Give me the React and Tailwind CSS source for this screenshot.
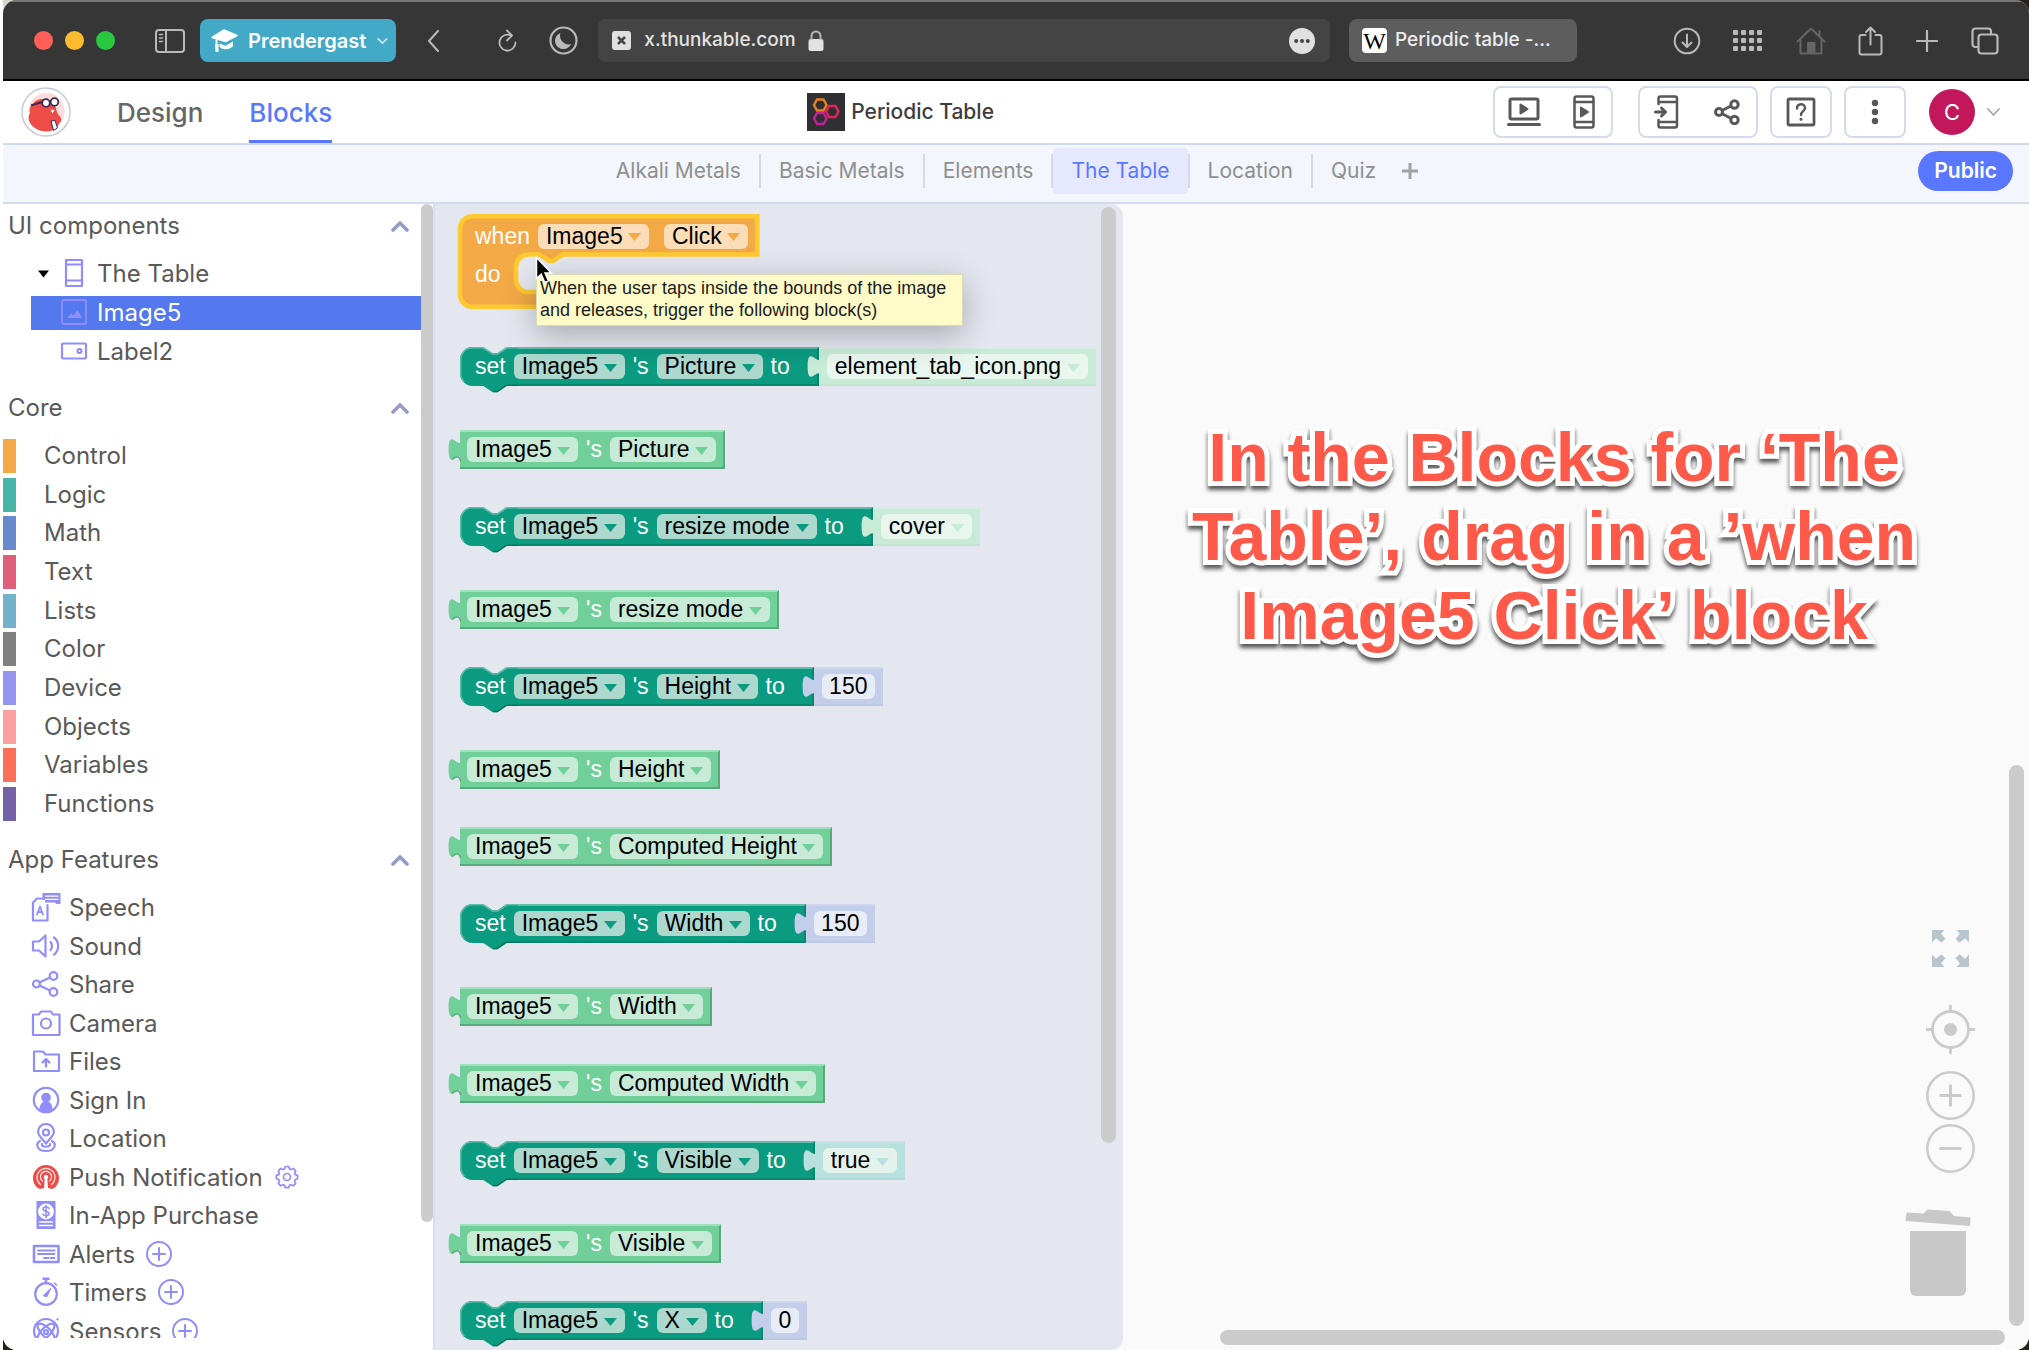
import React from "react";

/* ---------- browser toolbar icons ---------- */

const line = { fill: "none", stroke: "currentColor", strokeLinecap: "round", strokeLinejoin: "round" };

function SidebarIcon() {
  return (
    <svg className="h-6 w-[30px]" viewBox="0 0 30 24" {...line} strokeWidth="2">
      <rect x="1" y="1" width="28" height="22" rx="3" />
      <path d="M11 1v22" />
      <path d="M4.500 5.500h3M4.500 9h3M4.500 12.500h3" strokeWidth="1.500" />
    </svg>
  );
}

function CapIcon() {
  return (
    <svg className="h-6 w-[27px]" viewBox="0 0 27 24" fill="white">
      <path d="M13 1 26 6.500 14.500 12.500 1 8.500z" stroke="white" strokeWidth="1.500" strokeLinejoin="round" />
      <path d="M8.500 14.500l6 2.200L22 12.500v4.500c-2 2.500-5.500 3.500-8 3.300-3-.2-4.500-1.300-5.500-2.800z" />
      <path d="M5.500 10.500v6" stroke="white" strokeWidth="2" fill="none" />
      <path d="M4 15h3.500v8h-3z" />
    </svg>
  );
}

function Chevron({ className, d = "M1 1l5 5 5-5", box = "0 0 12 7", width = 2 }) {
  return (
    <svg className={className} viewBox={box} {...line} strokeWidth={width}>
      <path d={d} />
    </svg>
  );
}

function BrowserBar() {
  return (
    <div className="flex h-[81px] shrink-0 items-center border-t-2 border-b-2 border-t-[#767676] border-b-black bg-[#363636] pr-[30px] pl-[31px] font-[Inter] text-[#b9b9b9]">
      <div className="flex shrink-0 gap-3">
        <button aria-label="Close" className="size-[19px] rounded-full bg-[#ff5f56]" />
        <button aria-label="Minimise" className="size-[19px] rounded-full bg-[#fdbc2f]" />
        <button aria-label="Zoom" className="size-[19px] rounded-full bg-[#28c840]" />
      </div>
      <button aria-label="Sidebar" className="ml-10 shrink-0"><SidebarIcon /></button>
      <button className="ml-[15px] flex h-[43px] shrink-0 items-center rounded-lg bg-[#42a9c6] pr-2 pl-[11px] text-[20px] font-semibold text-white">
        <CapIcon />
        <span className="ml-[10px]">Prendergast</span>
        <Chevron className="ml-[11px] h-[6px] w-[11px] text-white/70" />
      </button>
      <button aria-label="Back" className="ml-[31px] shrink-0">
        <Chevron className="h-[22px] w-3" box="0 0 12 22" d="M11 1 2 11l9 10" />
      </button>
      <button aria-label="Reload" className="ml-[59px] shrink-0">
        <svg className="h-[23px] w-[19px]" viewBox="0 0 19 23" {...line} strokeWidth="1.800">
          <path d="M13 6.400A8 8 0 1 0 17.500 13.500" />
          <path d="M9 1.500l5 5-5 5" />
        </svg>
      </button>
      <button aria-label="Dark mode" className="ml-8 shrink-0">
        <svg className="size-[29px]" viewBox="0 0 29 29">
          <circle cx="14.500" cy="14.500" r="13" fill="none" stroke="currentColor" strokeWidth="2.200" />
          <path d="M11.500 7a8.300 8.300 0 1 0 10.500 11A8.600 8.600 0 0 1 11.500 7z" fill="currentColor" />
        </svg>
      </button>
      <div className="ml-5 flex h-[43px] min-w-0 flex-1 items-center rounded-lg bg-[#444444] pr-[15px] pl-[14px] text-[#e2e2e2]">
        <svg className="size-[19px] shrink-0" viewBox="0 0 19 19">
          <rect width="19" height="19" rx="3" fill="#e0e0e0" />
          <path d="M6 6l7 7M13 6l-7 7" stroke="#444" strokeWidth="2.500" />
        </svg>
        <input aria-label="Address" defaultValue="x.thunkable.com" className="ml-[13px] w-[158px] bg-transparent text-[19px] font-medium outline-none" />
        <svg className="ml-1.5 h-[22px] w-4 shrink-0" viewBox="0 0 16 22">
          <rect x="0.500" y="9" width="15" height="12" rx="2" fill="#e2e2e2" />
          <path d="M3.500 10V6a4.500 4.500 0 0 1 9 0v4" fill="none" stroke="#b5b5b5" strokeWidth="2" />
        </svg>
        <button aria-label="Page options" className="ml-auto shrink-0">
          <svg className="size-[26px]" viewBox="0 0 26 26">
            <circle cx="13" cy="13" r="13" fill="#e0e0e0" />
            <circle cx="7.200" cy="13" r="2" fill="#444" />
            <circle cx="13" cy="13" r="2" fill="#444" />
            <circle cx="18.800" cy="13" r="2" fill="#444" />
          </svg>
        </button>
      </div>
      <button className="ml-[19px] flex h-[43px] w-[228px] shrink-0 items-center rounded-lg bg-[#5d5d5d] pl-[13px] text-[19px] font-medium text-[#ececec]">
        <span className="flex size-[25px] items-center justify-center rounded bg-white font-['Liberation_Serif'] text-[24px] leading-none text-black">W</span>
        <span className="ml-2">Periodic table -...</span>
      </button>
      <button aria-label="Downloads" className="ml-24 shrink-0">
        <svg className="size-7" viewBox="0 0 28 28" {...line} strokeWidth="2">
          <circle cx="14" cy="14" r="12.300" />
          <path d="M14 7.500v12M9.500 15.500l4.500 4.500 4.500-4.500" />
        </svg>
      </button>
      <button aria-label="Sites" className="ml-8 grid shrink-0 grid-cols-4 gap-[3px]">
        {Array.from({ length: 12 }, (_, i) => (
          <span key={i} className="size-[5px] rounded-[1px] bg-[#b9b9b9]" />
        ))}
      </button>
      <button aria-label="Home" className="ml-[34px] shrink-0 text-[#656565]">
        <svg className="h-7 w-[30px]" viewBox="0 0 30 28" {...line} strokeWidth="2">
          <path d="M1.500 14.500 15 1.500l13.500 13M4.500 12.500V26.500h21v-14M23.500 9V4" />
          <rect x="12" y="16" width="6.500" height="10" fill="currentColor" />
        </svg>
      </button>
      <button aria-label="Share page" className="ml-8 shrink-0">
        <svg className="h-[30px] w-[25px]" viewBox="0 0 25 30" {...line} strokeWidth="2">
          <path d="M7.500 9H3.500a2 2 0 0 0-2 2v15.500a2 2 0 0 0 2 2h18a2 2 0 0 0 2-2V11a2 2 0 0 0-2-2h-4" />
          <path d="M12.500 18.500V1.500M8 6l4.500-4.500L17 6" />
        </svg>
      </button>
      <button aria-label="New tab" className="ml-[33px] shrink-0">
        <svg className="size-[22px]" viewBox="0 0 22 22" {...line} strokeWidth="2.200"><path d="M11 1v20M1 11h20" /></svg>
      </button>
      <button aria-label="Tab overview" className="ml-[33px] shrink-0">
        <svg className="size-7" viewBox="0 0 28 28" {...line} strokeWidth="2.200">
          <rect x="7.500" y="7.500" width="19" height="19" rx="3" />
          <path d="M7 20H4.500a3 3 0 0 1-3-3V4.500a3 3 0 0 1 3-3H17a3 3 0 0 1 3 3V7" />
        </svg>
      </button>
    </div>
  );
}

/* ---------- app header ---------- */

function Beaver() {
  return (
    <svg className="size-[50px]" viewBox="0 0 50 50">
      <circle cx="25" cy="25" r="24" fill="#fff" stroke="#c5cad9" strokeWidth="1.500" />
      <circle cx="25.500" cy="24" r="18" fill="#fbdcda" />
      <path d="M9 26c-1-4 .5-7 3-9 2-3.500 7-6 12-4.500 6-.5 9 3.500 10.500 7.500 1 2.500.5 4 3 8 3.500 3 3.500 6 1 8-2 5-7 8.500-13.500 8.500C15 44 8 38 7.500 31c0-2 .7-3.500 1.500-5z" fill="#ee4c47" />
      <g fill="#fff" stroke="#3b2a55" strokeWidth="1.800">
        <circle cx="25" cy="16" r="3.800" />
        <circle cx="33.500" cy="15" r="3.800" />
      </g>
      <path d="M10 18.500l11-3.500" stroke="#3b2a55" strokeWidth="2" />
      <path d="M29.500 22.500l4 .5-2 3.500z" fill="#fff" />
      <path d="M30 34l4-.5 2.500 7.500-4 2.500z" fill="#fff" stroke="#3b2a55" strokeWidth="1" />
    </svg>
  );
}

function ProjectIcon() {
  return (
    <svg className="h-[38px] w-[38px]" viewBox="0 0 38 38" fill="none" strokeWidth="2.400">
      <rect width="38" height="38" fill="#302f33" />
      <path d="M10 6.500h6.500l3 5.500-3 5.500H10L7 12z" stroke="#e8821f" />
      <path d="M22 13h6.500l3 5.500-3 5.500H22l-3-5.500z" stroke="#e0245c" />
      <path d="M10 20h6.500l3 5.500-3 5.500H10l-3-5.500z" stroke="#c4219a" />
    </svg>
  );
}

const boxed = "flex h-[52px] items-center rounded-lg border-2 border-[#d5dbed] text-[#58585a]";

function Header() {
  return (
    <header className="flex h-[64px] shrink-0 items-center justify-between border-b-2 border-[#d3d9ec] bg-white pr-[29px] pl-[18px] font-[Inter]">
      <div className="flex h-full items-center">
        <a href="#home" aria-label="Home"><Beaver /></a>
        <a href="#design" className="ml-[46px] text-[26px] font-medium text-[#666]">Design</a>
        <a href="#blocks" className="ml-[46px] flex h-full items-center border-t-3 border-b-3 border-t-transparent border-b-[#5a78ff] text-[26px] font-medium text-[#5a78ff]">Blocks</a>
      </div>
      <div className="mr-6 flex items-center gap-1.5">
        <ProjectIcon />
        <h1 className="text-[21px] font-medium text-[#3d3d3d]">Periodic Table</h1>
      </div>
      <div className="flex items-center">
        <div className={`${boxed} w-[120px] justify-between pr-[16px] pl-[12px]`}>
          <button aria-label="Web preview">
            <svg className="h-[30px] w-[34px]" viewBox="0 0 34 30" {...line} strokeWidth="3">
              <rect x="3" y="2" width="28" height="20" rx="1.500" />
              <path d="M1.500 27.500h31" />
              <path d="M13.500 7.500v9l7-4.500z" fill="currentColor" strokeWidth="2" />
            </svg>
          </button>
          <button aria-label="Phone preview">
            <svg className="h-[34px] w-[22px]" viewBox="0 0 22 34" {...line} strokeWidth="2.500">
              <rect x="1.500" y="1.500" width="19" height="31" rx="2" />
              <path d="M2 7h18M2 27h18" />
              <path d="M8 12.500v9l7-4.500z" fill="currentColor" strokeWidth="2" />
            </svg>
          </button>
        </div>
        <div className={`${boxed} ml-[25px] w-[120px] justify-between pr-[16px] pl-[14px]`}>
          <button aria-label="Send to phone">
            <svg className="h-[34px] w-[25px]" viewBox="0 0 25 34" {...line} strokeWidth="2.500">
              <path d="M4.500 9V3.500a2 2 0 0 1 2-2H21a2 2 0 0 1 2 2v27a2 2 0 0 1-2 2H6.500a2 2 0 0 1-2-2V25M4.500 7h18M4.500 27h18" />
              <path d="M1.500 17h9M7.500 13l4 4-4 4" strokeWidth="3" />
            </svg>
          </button>
          <button aria-label="Share project">
            <svg className="size-[26px]" viewBox="0 0 26 26" {...line} strokeWidth="3">
              <path d="M5 13 20 5.500M5 13l15 8" />
              <circle cx="5" cy="13" r="3.500" fill="white" />
              <circle cx="20.500" cy="5.500" r="3.700" fill="white" />
              <circle cx="20.500" cy="21" r="3.700" fill="white" />
            </svg>
          </button>
        </div>
        <button aria-label="Help" className={`${boxed} ml-3 w-[62px] justify-center`}>
          <svg className="size-[30px]" viewBox="0 0 30 30" {...line} strokeWidth="2.800">
            <rect x="2" y="2" width="26" height="26" rx="1.500" />
            <path d="M11 11.500c0-5.500 8-5.500 8-.5 0 3-4 3.500-4 7" strokeWidth="2.400" />
            <circle cx="15" cy="22.300" r="0.800" fill="currentColor" strokeWidth="1.500" />
          </svg>
        </button>
        <button aria-label="More" className={`${boxed} ml-3 w-[62px] justify-center`}>
          <svg className="h-[26px] w-2" viewBox="0 0 8 26" fill="currentColor">
            <circle cx="4" cy="4" r="3.200" /><circle cx="4" cy="13" r="3.200" /><circle cx="4" cy="22" r="3.200" />
          </svg>
        </button>
        <button className="ml-[23px] flex items-center">
          <span className="flex size-[46px] items-center justify-center rounded-full bg-[#c2185b] text-[22px] text-white">C</span>
          <Chevron className="ml-3 h-[8px] w-[13px] text-[#a5a5a5]" box="0 0 13 8" d="M1 1l5.500 6L12 1" width={1.800} />
        </button>
      </div>
    </header>
  );
}

const screens = ["Alkali Metals", "Basic Metals", "Elements", "The Table", "Location", "Quiz"];

function ScreenTabs() {
  return (
    <nav className="grid h-[59px] shrink-0 grid-cols-[1fr_auto_1fr] items-center border-b-2 border-[#d3dbeb] bg-[#f3f6fd] pr-4 font-[Inter] text-[21px] text-[#8f8f8f]">
      <span />
      <div className="mb-1.5 flex items-center pl-1">
        {screens.map((s) => {
          const on = s === "The Table";
          return (
            <div key={s} className="flex items-center">
              <button className={on ? "h-[46px] rounded bg-[#e6e8ff] px-[18px] text-[#5a78ff]" : "h-[46px] px-[18px]"}>{s}</button>
              {s !== "Quiz" && <span className="h-[34px] w-0.5 bg-[#d3d9ea]" />}
            </div>
          );
        })}
        <button aria-label="Add screen" className="ml-1 px-1">
          <svg className="size-4" viewBox="0 0 16 16" stroke="#a2a2a2" strokeWidth="3"><path d="M8 0v16M0 8h16" /></svg>
        </button>
      </div>
      <button className="mb-1.5 h-10 justify-self-end rounded-full bg-[#5a78ff] px-4 text-[21px] font-semibold text-white">Public</button>
    </nav>
  );
}

/* ---------- left panel ---------- */

function Glyph({ children }) {
  return (
    <svg className="mb-0.5 size-[30px] shrink-0" viewBox="0 0 30 30" {...line} strokeWidth="2.200">{children}</svg>
  );
}

const glyphs = {
  screen: (
    <Glyph><path d="M7 2h16v26H7zM7 6.500h16M7 22.500h16" /></Glyph>
  ),
  image: (
    <Glyph>
      <rect x="3" y="3" width="24" height="24" rx="2" strokeWidth="1.800" />
      <path d="M8 21l4-5 2.500 2.500 4-5.500L23 21z" fill="currentColor" stroke="none" />
    </Glyph>
  ),
  label: (
    <Glyph><rect x="3" y="7.500" width="24" height="15" rx="1" /><circle cx="20.500" cy="15" r="2" /></Glyph>
  ),
  speech: (
    <Glyph>
      <path d="M11 6.500H6L2 10.500V28.500h14.500V13" />
      <path d="M6 22.500 9 14.500l3 8M7 20h4" strokeWidth="1.800" />
      <path d="M11.500 1h18v11h-4l-1.500-1.500H14V8h-2.500z" fill="currentColor" stroke="none" />
      <path d="M14.500 4.200h12.500M14.500 7.300h12.500" stroke="white" strokeWidth="1.200" />
    </Glyph>
  ),
  sound: (
    <Glyph>
      <path d="M2 10.500h6l6.500-6v21l-6.500-6H2z" />
      <path d="M19.500 11c2 1.500 2 6.500 0 8M23 6.500c5.500 4 5.500 13 0 17" />
    </Glyph>
  ),
  share: (
    <Glyph>
      <path d="M8.500 13.500 19 8.500M8.500 16.500 19 21.500" />
      <circle cx="5.500" cy="15" r="3.500" /><circle cx="22.500" cy="7" r="3.800" /><circle cx="22.500" cy="23" r="3.800" />
    </Glyph>
  ),
  camera: (
    <Glyph>
      <path d="M2 6.500h6l2-3h10l2 3h6.500V27H2z" /><circle cx="15" cy="15.500" r="5" />
    </Glyph>
  ),
  files: (
    <Glyph>
      <path d="M3 5.500h9l2.500 3H28V25H3z" /><path d="M15 20.500V13.500M11.500 16.500 15 13l3.500 3.500" strokeWidth="2.400" />
    </Glyph>
  ),
  signin: (
    <Glyph>
      <circle cx="15" cy="15" r="12.200" />
      <circle cx="15" cy="12.500" r="4.800" fill="currentColor" stroke="none" />
      <path d="M8.500 24.500c0-5 2.500-7.500 4.500-8h4c2 .5 4.500 3 4.500 8-3.500 2.700-9.500 2.700-13 0z" fill="currentColor" stroke="none" />
    </Glyph>
  ),
  location: (
    <Glyph>
      <path d="M15 20.500C10 14.500 7 12 7 9a8 8 0 0 1 16 0c0 3-3 5.500-8 11.500z" /><circle cx="15" cy="9.500" r="3" />
      <path d="M9 18c-5 3-3 10 6 10s11-7 6-10" /><path d="M11 21c-1.500 3.500 9.500 3.500 8 0" />
    </Glyph>
  ),
  push: (
    <Glyph>
      <path d="M6 25.500A13 13 0 1 1 24 25.500l-3 1.500-4-1-1-10h-2l-1 10-4 1z" fill="#ec4b48" stroke="none" />
      <g stroke="#ffd9d6" strokeWidth="1.300">
        <path d="M9.500 22.500a9 9 0 1 1 11 0" /><path d="M11.500 19a5.500 5.500 0 1 1 7 0" />
      </g>
      <circle cx="15" cy="15" r="2.200" fill="white" stroke="none" />
      <path d="M15 15v13" stroke="white" strokeWidth="2.500" />
    </Glyph>
  ),
  purchase: (
    <Glyph>
      <path d="M5.500 1h19v28h-19z" fill="currentColor" stroke="none" />
      <circle cx="15" cy="11.500" r="8.700" fill="white" strokeWidth="1.600" />
      <path d="M18 8.500c-1-2-6-2-6 .5 0 3 6 1.500 6 4.500 0 2.700-5 3-6 .5M15 5.500v12" strokeWidth="1.600" />
      <path d="M8.500 22h13M8.500 25.500h13" stroke="white" strokeWidth="1.300" />
    </Glyph>
  ),
  alerts: (
    <Glyph>
      <rect x="3" y="7" width="24.500" height="16" strokeWidth="2.600" />
      <path d="M7 11.500h16.500M7 15h16.500M13 19h4.500M19.500 19h4" strokeWidth="1.800" />
    </Glyph>
  ),
  timers: (
    <Glyph>
      <circle cx="15" cy="17" r="10.800" /><path d="M12.500 1.800h5M15 2v4" strokeWidth="2.600" />
      <path d="M12.500 18.500 20 11l-4 8.500z" fill="currentColor" strokeWidth="1" /><path d="M23.500 6l2 2" strokeWidth="1.500" />
    </Glyph>
  ),
  sensors: (
    <Glyph>
      <circle cx="15" cy="15" r="12" /><ellipse cx="15" cy="16" rx="11" ry="4.500" transform="rotate(45 15 16)" />
      <ellipse cx="15" cy="16" rx="11" ry="4.500" transform="rotate(-45 15 16)" /><circle cx="15" cy="16" r="2" /><path d="M26.500 3v.5" />
    </Glyph>
  ),
};

function PlusCircle() {
  return (
    <svg className="mb-0.5 size-[26px] text-[#918efb]" viewBox="0 0 26 26" {...line} strokeWidth="2">
      <circle cx="13" cy="13" r="12" /><path d="M13 7v12M7 13h12" />
    </svg>
  );
}

function Gear() {
  return (
    <svg className="mb-0.5 size-6 text-[#918efb]" viewBox="0 0 24 24" {...line} strokeWidth="1.700">
      <circle cx="12" cy="12" r="3.500" />
      <path d="M10.300 1.500h3.400l.8 2.400 1.500.6 2.300-1.100 2.400 2.400-1.100 2.300.6 1.500 2.400.8v3.400l-2.400.8-.6 1.500 1.100 2.300-2.400 2.400-2.300-1.100-1.500.6-.8 2.400h-3.400l-.8-2.400-1.500-.6-2.300 1.100-2.400-2.400 1.100-2.300-.6-1.500-2.400-.8v-3.400l2.400-.8.6-1.500-1.100-2.300 2.400-2.400 2.300 1.100 1.500-.6z" />
    </svg>
  );
}

function Section({ title, children }) {
  return (
    <section className="mb-[17px]">
      <button className="mb-[9px] flex h-11 w-full items-center justify-between pr-3 pl-[5px]">
        <span>{title}</span>
        <Chevron className="h-3 w-[18px] text-[#959cc6]" box="0 0 18 12" d="M2 10l7-7 7 7" width={3.600} />
      </button>
      {children}
    </section>
  );
}

const core = [
  ["Control", "bg-[#f4a947]"], ["Logic", "bg-[#48b5a6]"], ["Math", "bg-[#6889cc]"], ["Text", "bg-[#df5f7b]"], ["Lists", "bg-[#74b2cb]"],
  ["Color", "bg-[#808080]"], ["Device", "bg-[#9594ee]"], ["Objects", "bg-[#fba0a1]"], ["Variables", "bg-[#fc705a]"], ["Functions", "bg-[#7761a6]"],
];

const features = [
  ["Speech", "speech"], ["Sound", "sound"], ["Share", "share"], ["Camera", "camera"], ["Files", "files"], ["Sign In", "signin"],
  ["Location", "location"], ["Push Notification", "push", "gear"], ["In-App Purchase", "purchase"], ["Alerts", "alerts", "plus"],
  ["Timers", "timers", "plus"], ["Sensors", "sensors", "plus"],
];

function Toolbox() {
  return (
    <aside className="flex w-[432px] shrink-0 border-r-2 border-[#d8deee] bg-white font-[Inter] text-[24px] leading-[34px] text-[#595959]">
      <div className="mb-3 min-w-0 flex-1 overflow-hidden">
        <Section title="UI components">
          <ul className="flex flex-col gap-[5px] pl-7">
            <li>
              <button className="flex h-[34px] items-center">
                <svg className="ml-[7px] h-2 w-[11px]" viewBox="0 0 11 8"><path d="M0 .5h11L5.500 7.500z" fill="black" /></svg>
                <span className="ml-[10px] flex text-[#918efb]">{glyphs.screen}</span>
                <span className="ml-2">The Table</span>
              </button>
            </li>
            <li>
              <button className="flex h-[34px] w-full items-center bg-[#5479ef] pl-7 text-white">
                <span className="flex text-[#918efb]">{glyphs.image}</span>
                <span className="ml-2">Image5</span>
              </button>
            </li>
            <li>
              <button className="flex h-[34px] items-center pl-7">
                <span className="flex text-[#918efb]">{glyphs.label}</span>
                <span className="ml-2">Label2</span>
              </button>
            </li>
          </ul>
        </Section>
        <Section title="Core">
          <ul className="flex h-[382px] flex-col justify-between">
            {core.map(([name, color]) => (
              <li key={name}>
                <button className="flex items-center">
                  <span className={`h-[34px] w-[13px] ${color}`} />
                  <span className="ml-7">{name}</span>
                </button>
              </li>
            ))}
          </ul>
        </Section>
        <Section title="App Features">
          <ul className="flex h-[458px] flex-col justify-between pl-7">
            {features.map(([name, icon, extra]) => (
              <li key={name} className="flex h-[34px] items-center">
                <button className="flex items-center">
                  <span className="flex text-[#918efb]">{glyphs[icon]}</span>
                  <span className="ml-2">{name}</span>
                </button>
                {extra === "plus" && <button aria-label={`Add to ${name}`} className="ml-[11px]"><PlusCircle /></button>}
                {extra === "gear" && <button aria-label={`${name} settings`} className="ml-3"><Gear /></button>}
              </li>
            ))}
          </ul>
        </Section>
      </div>
      <div className="h-[1018px] w-3 shrink-0 rounded-full bg-[#cbcbcb]" />
    </aside>
  );
}

/* ---------- blocks ---------- */

const tones = {
  event: { field: "bg-[#fbddb8]", arrow: "text-[#f4a947]" },
  setter: { field: "bg-[#acd8ce]", arrow: "text-[#0b9b80]" },
  getter: { field: "bg-[#c8ebd7]", arrow: "text-[#71cf9a]" },
  picture: { body: "bg-[#c7ebd7]", tab: "text-[#c7ebd7]", field: "bg-[#e8f6ed]", arrow: "text-[#c7ebd7]", edge: "border-t-[#d3efdf] border-b-[#c0e4d0]" },
  number: { body: "bg-[#c3cfea]", tab: "text-[#c3cfea]", field: "bg-[#e7ecf6]", edge: "border-t-[#cdd7ee] border-b-[#bcc8e4]" },
  logic: { body: "bg-[#b7e0de]", tab: "text-[#b7e0de]", field: "bg-[#e3f3ec]", arrow: "text-[#b7e0de]", edge: "border-t-[#c4e6e3] border-b-[#b0d9d7]" },
};

function Dropdown({ value, label, tone }) {
  const t = tones[tone];
  return (
    <span className="relative flex items-center">
      <select aria-label={label} className={`h-[25px] appearance-none rounded-md pr-[26px] pl-2 leading-[25px] text-black ${t.field}`} defaultValue={value}>
        <option>{value}</option>
      </select>
      <svg className={`pointer-events-none absolute right-2 mt-0.5 h-2 w-[13px] ${t.arrow}`} viewBox="0 0 13 8">
        <path d="M0 0h13L6.500 8z" fill="currentColor" />
      </svg>
    </span>
  );
}

function Tab({ className }) {
  return (
    <svg className={`absolute top-[6px] -left-3 h-6 w-[13px] ${className}`} viewBox="0 0 13 24">
      <path d="M13 0C13 15.500 .600 -12.400 .600 11.600s12.400-3.900 12.400 11.700z" fill="currentColor" />
    </svg>
  );
}

function Getter({ prop }) {
  return (
    <div className="relative ml-[25px] flex h-[39px] w-fit items-center gap-2 border-t-2 border-r-2 border-b-2 border-t-[#a1e0bc] border-r-[#5aa97d] border-b-[#5aa97d] bg-[#71cf9a] pr-[7px] pl-[7px]">
      <svg className="absolute -top-0.5 -left-3 h-[39px] w-[13px]" viewBox="0 0 13 39">
        <path d="M13 8C13 23.500 .600 -4.400 .600 19.600s12.400-3.900 12.400 11.700z" fill="#71cf9a" />
        <path d="M4 29.500C6 27 12 24.500 12.400 31" fill="none" stroke="#5aa97d" strokeWidth="1.500" />
      </svg>
      <Dropdown value="Image5" label="Component" tone="getter" />
      <span>'s</span>
      <Dropdown value={prop} label="Property" tone="getter" />
    </div>
  );
}

function Setter({ prop, value, tone, width }) {
  const t = tones[tone];
  return (
    <div className="relative mb-1.5 ml-[25px] flex h-[39px] w-fit">
      <svg className="absolute top-0 left-0 h-[46px] w-[60px]" viewBox="0 0 60 46">
        <path d="M60 0H46.700l-9.300 6.200h-4.700L23.300 0H12.400A12.400 12.400 0 0 0 0 12.400v14.200A12.400 12.400 0 0 0 12.400 39h10.900l9.400 6.200h4.700L46.700 39H60z" fill="#0b9b80" />
        <path d="M60 .8H46.900l-9.300 6.200h-5.100L23.100 .8H12.400A11.600 11.600 0 0 0 .8 12.400v14.200c0 3 1 6 3.500 8.300" fill="none" stroke="#5fbda9" strokeWidth="1.500" />
        <path d="M60 38.200H46.500L37.200 44.400h-4.500" fill="none" stroke="#08765f" strokeWidth="1.500" />
      </svg>
      <div className="relative flex items-center gap-2 pr-[29px] pl-[15px]">
        <span className="absolute inset-y-0 right-0 left-[58px] border-t-2 border-r-2 border-b-2 border-t-[#5fbda9] border-r-[#08866e] border-b-[#08866e] bg-[#0b9b80]" />
        <span className="relative">set</span>
        <Dropdown value="Image5" label="Component" tone="setter" />
        <span className="relative">'s</span>
        <Dropdown value={prop} label="Property" tone="setter" />
        <span className="relative">to</span>
      </div>
      <div className={`relative flex items-center border-y-2 px-2 ${t.body} ${t.edge}`}>
        <Tab className={t.tab} />
        {tone === "number" ? (
          <input aria-label={`${prop} value`} defaultValue={value} className={`h-[25px] rounded-md text-center text-black ${width} ${t.field}`} />
        ) : (
          <Dropdown value={value} label={`${prop} value`} tone={tone} />
        )}
      </div>
    </div>
  );
}

function EventBlock() {
  return (
    <div className="relative ml-[25px] h-[93px] w-[300px]">
      <svg className="absolute -top-1 -left-1 h-[100px] w-[310px]" viewBox="456 212 310 100">
        <path
          d="M472.400 216.300H757.200V254.500H562.700l-9.300 6.200h-4.700L539.300 254.500H528.400A12.400 12.400 0 0 0 516 266.900v12.700A12.400 12.400 0 0 0 528.400 292H757.200V306.800H472.400A12.400 12.400 0 0 1 460 294.400V228.700A12.400 12.400 0 0 1 472.400 216.300z"
          fill="#f4a947" stroke="#ffca30" strokeWidth="4.600"
        />
      </svg>
      <div className="relative flex h-10 items-center pl-[15px]">
        <span className="mr-2">when</span>
        <Dropdown value="Image5" label="Component" tone="event" />
        <span className="w-[15px]" />
        <Dropdown value="Click" label="Event" tone="event" />
      </div>
      <div className="relative flex h-9 items-center pl-[15px]">do</div>
      <div role="tooltip" className="absolute top-[58px] left-[76px] z-10 w-[427px] border border-[#dcdbb8] bg-[#fefbc8] pt-[2px] pb-[4px] pl-[3px] text-[18px] leading-[22px] whitespace-nowrap text-[#1c1c1c] shadow-[0_8px_32px_rgba(0,0,0,0.28)]">
        When the user taps inside the bounds of the image
        <br />
        and releases, trigger the following block(s)
      </div>
      <svg className="absolute top-[40px] left-[75px] z-20 h-[30px] w-[19px]" viewBox="0 0 19 30">
        <path d="M1.500 1.500v21l4.700-4.300 3.600 8.300 3.700-1.600-3.500-8h6.200z" fill="black" stroke="white" strokeWidth="1.500" />
      </svg>
    </div>
  );
}

function Flyout() {
  return (
    <div className="flex w-[688px] shrink-0 rounded-r-xl bg-[#e4e7ef]">
      <div className="flex min-w-0 flex-1 flex-col gap-[38px] overflow-hidden pt-3 font-['Liberation_Sans',sans-serif] text-[23px] leading-none text-white">
        <EventBlock />
        <Setter prop="Picture" value="element_tab_icon.png" tone="picture" />
        <Getter prop="Picture" />
        <Setter prop="resize mode" value="cover" tone="picture" />
        <Getter prop="resize mode" />
        <Setter prop="Height" value="150" tone="number" width="w-[53px]" />
        <Getter prop="Height" />
        <Getter prop="Computed Height" />
        <Setter prop="Width" value="150" tone="number" width="w-[53px]" />
        <Getter prop="Width" />
        <Getter prop="Computed Width" />
        <Setter prop="Visible" value="true" tone="logic" />
        <Getter prop="Visible" />
        <Setter prop="X" value="0" tone="number" width="w-[28px]" />
      </div>
      <div className="mt-[3px] mr-[7px] h-[936px] w-[15px] shrink-0 rounded-full bg-[#cbcbcb]" />
    </div>
  );
}

/* ---------- canvas ---------- */

function Workspace() {
  return (
    <main className="relative min-w-0 flex-1 bg-[#fafafa] pt-[214px] pr-11">
      <p className="text-center font-['Liberation_Sans',sans-serif] text-[68px] leading-[79px] font-bold text-[#ff594a] [-webkit-text-stroke:10px_white] [filter:drop-shadow(0_4px_2px_rgba(0,0,0,0.65))] [paint-order:stroke_fill]">
        In the Blocks for ‘The
        <br />
        Table’, drag in a ’when
        <br />
        Image5 Click’ block
      </p>
      <div className="absolute right-[54px] bottom-[54px] flex flex-col items-end text-[#cbcbcb]">
        <button aria-label="Full screen" className="mr-1.5">
          <svg className="size-[37px] text-[#b9c5cc]" viewBox="0 0 37 37" fill="currentColor">
            <path id="arrow" d="M0 0h12.500L9 3.700l4.500 5-4 4-5.500-4.500L0 12.500z" />
            <use href="#arrow" transform="matrix(-1 0 0 1 37 0)" />
            <use href="#arrow" transform="matrix(1 0 0 -1 0 37)" />
            <use href="#arrow" transform="matrix(-1 0 0 -1 37 37)" />
          </svg>
        </button>
        <button aria-label="Centre" className="mt-[38px]">
          <svg className="size-[49px]" viewBox="0 0 49 49" {...line} strokeLinecap="butt" strokeWidth="2.800">
            <circle cx="24.500" cy="24.500" r="18" /><circle cx="24.500" cy="24.500" r="6.500" fill="currentColor" stroke="none" />
            <path d="M24.500 0v6M24.500 43v6M0 24.500h6M43 24.500h6" />
          </svg>
        </button>
        <button aria-label="Zoom in" className="mt-[17px]">
          <svg className="size-[49px]" viewBox="0 0 49 49" {...line} strokeLinecap="butt" strokeWidth="2.500">
            <circle cx="24.500" cy="24.500" r="23.200" /><path d="M24.500 13.500v22M13.500 24.500h22" strokeWidth="3" />
          </svg>
        </button>
        <button aria-label="Zoom out" className="mt-1">
          <svg className="size-[49px]" viewBox="0 0 49 49" {...line} strokeLinecap="butt" strokeWidth="2.500">
            <circle cx="24.500" cy="24.500" r="23.200" /><path d="M13.500 24.500h22" strokeWidth="3" />
          </svg>
        </button>
        <button aria-label="Trash" className="mt-9 mr-1">
          <svg className="h-[87px] w-[66px]" viewBox="0 0 66 87" fill="#c8c8c8">
            <path d="M1.500 3.500l17 1L22.500 .500l22 1.500 4.500 5 16.500 1.500-.5 8.500L.5 12z" />
            <path d="M5 22h56v59a6 6 0 0 1-6 6H11a6 6 0 0 1-6-6z" />
          </svg>
        </button>
      </div>
      <div className="absolute right-[5px] bottom-6 h-[561px] w-[15px] rounded-full bg-[#cbcbcb]" />
      <div className="absolute right-6 bottom-[5px] left-[97px] h-[15px] rounded-full bg-[#cbcbcb]" />
    </main>
  );
}

export default function App() {
  return (
    <div className="h-screen bg-white pl-[3px]">
      <div className="h-full bg-[linear-gradient(135deg,#d6d6cc_0,#d6d6cc_40px,#2a2216_60px)]">
        <div className="flex h-full flex-col overflow-hidden rounded-[14px] bg-[#fafafa]">
          <BrowserBar />
          <Header />
          <ScreenTabs />
          <div className="flex min-h-0 flex-1">
            <Toolbox />
            <Flyout />
            <Workspace />
          </div>
        </div>
      </div>
    </div>
  );
}
